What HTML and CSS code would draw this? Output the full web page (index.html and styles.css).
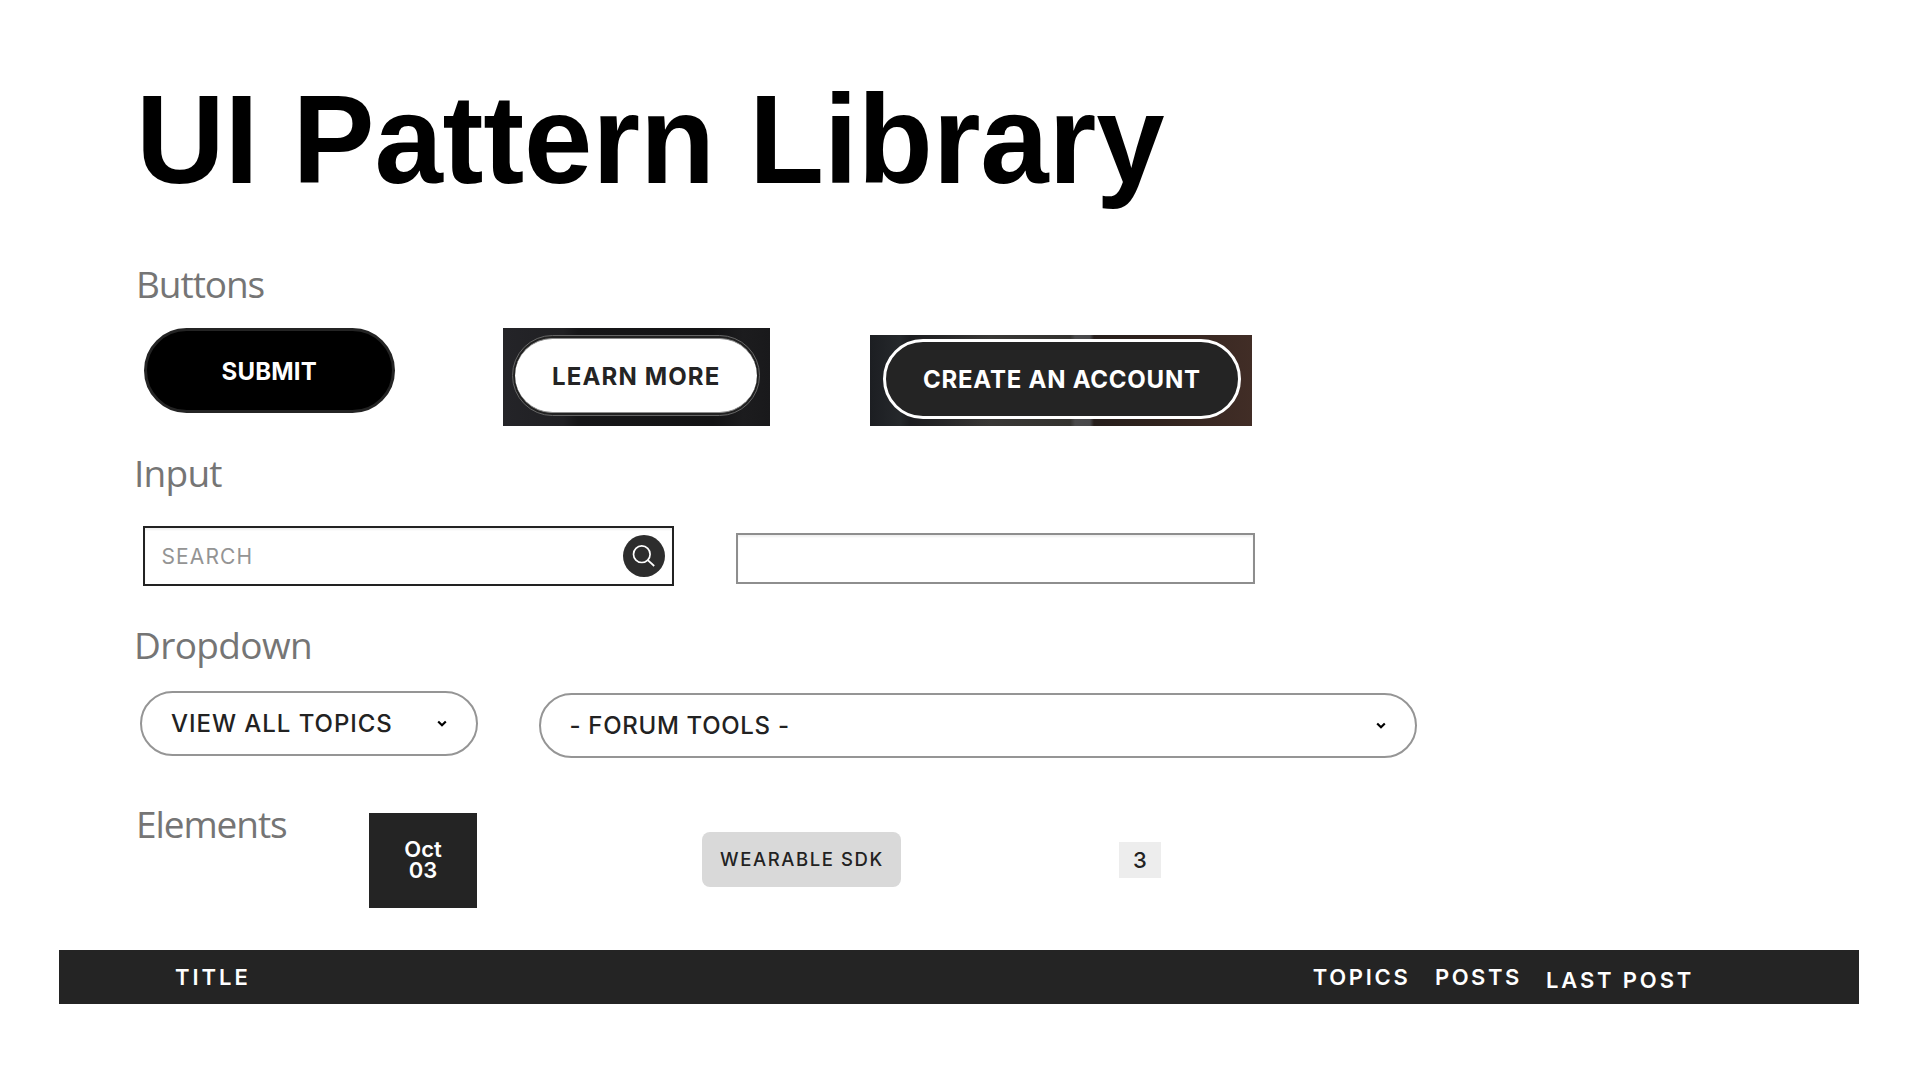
FILE: index.html
```html
<!DOCTYPE html>
<html lang="en">
<head>
  <meta charset="UTF-8">
  <meta name="viewport" content="width=device-width, initial-scale=1.0">
  <title>UI Pattern Library</title>
  <link rel="stylesheet" href="styles.css">
</head>
<body>
  <main class="page">
    <h1 class="page-title">UI Pattern Library</h1>

    <section class="section section-buttons">
      <h2 class="section-label label-buttons">Buttons</h2>
      <div class="row buttons-row">
        <button class="btn btn-submit">SUBMIT</button>
        <div class="photo photo-learn">
          <button class="btn btn-learn"><span class="btn-face">LEARN MORE</span></button>
        </div>
        <div class="photo photo-create">
          <button class="btn btn-create">CREATE AN ACCOUNT</button>
        </div>
      </div>
    </section>

    <section class="section section-input">
      <h2 class="section-label label-input">Input</h2>
      <div class="row input-row">
        <div class="search-box">
          <span class="search-placeholder">SEARCH</span>
          <svg class="search-icon" width="42" height="42" viewBox="0 0 42 42">
            <circle cx="21" cy="21" r="21" fill="#2d2d2d"/>
            <circle cx="18.8" cy="19.2" r="8.3" fill="none" stroke="#fff" stroke-width="1.7"/>
            <path d="M24.8 25.2 L31.2 31" fill="none" stroke="#fff" stroke-width="1.8"/>
          </svg>
        </div>
        <div class="text-box"></div>
      </div>
    </section>

    <section class="section section-dropdown">
      <h2 class="section-label label-dropdown">Dropdown</h2>
      <div class="row dropdown-row">
        <div class="select select-topics">
          <span class="select-text text-topics">VIEW ALL TOPICS</span>
          <svg class="chevron" width="10" height="8" viewBox="0 0 10 8"><path d="M1.2 1.5 L5 5.2 L8.8 1.5" fill="none" stroke="#000" stroke-width="2.2"/></svg>
        </div>
        <div class="select select-tools">
          <span class="select-text text-tools">- FORUM TOOLS -</span>
          <svg class="chevron" width="10" height="8" viewBox="0 0 10 8"><path d="M1.2 1.5 L5 5.2 L8.8 1.5" fill="none" stroke="#000" stroke-width="2.2"/></svg>
        </div>
      </div>
    </section>

    <section class="section section-elements">
      <h2 class="section-label label-elements">Elements</h2>
      <div class="date-tile">Oct<br>03</div>
      <span class="tag">WEARABLE SDK</span>
      <span class="count">3</span>
    </section>
  </main>

  <div class="table-head">
    <span class="col col-title">TITLE</span>
    <span class="col col-topics">TOPICS</span>
    <span class="col col-posts">POSTS</span>
    <span class="col col-last">LAST POST</span>
  </div>
</body>
</html>
```
FILE: styles.css
```css
* {
  margin: 0;
  padding: 0;
  box-sizing: border-box;
}

body {
  height: 1080px;
  background: #fff;
  font-family: Inter, "Liberation Sans", sans-serif;
  color: #222;
  overflow: hidden;
}

.page {
  padding: 75px 0 0 134px;
}

.page-title {
  margin-left: 2px;
  font-family: "Liberation Sans", Arial, sans-serif;
  font-size: 127px;
  line-height: 128px;
  font-weight: 700;
  letter-spacing: -0.18px;
  color: #000;
  transform: scaleX(0.968);
  transform-origin: 0 0;
}

.section-label {
  font-family: "Open Sans", "Noto Sans", sans-serif;
  font-size: 37px;
  line-height: 50px;
  font-weight: 400;
  color: #757575;
}

.label-buttons {
  padding-left: 2px;
  letter-spacing: -1.05px;
}

.label-input {
  letter-spacing: -0.75px;
}

.label-dropdown {
  letter-spacing: -0.63px;
}

.label-elements {
  width: 235px;
  padding-left: 2px;
  letter-spacing: -1.08px;
}

.row {
  display: flex;
  align-items: flex-start;
}

/* Buttons */
.section-buttons {
  margin-top: 56px;
}

.buttons-row {
  margin-top: 19px;
  padding-left: 10px;
}

.btn {
  display: flex;
  align-items: center;
  border: none;
  font-family: inherit;
  font-size: 24px;
  font-weight: 700;
  white-space: nowrap;
}

.btn-submit {
  width: 251px;
  height: 85px;
  padding: 2px 0 0 74.5px;
  border: 3px solid #242424;
  border-radius: 43px;
  background: #000;
  color: #fff;
  letter-spacing: 0.2px;
}

.photo {
  display: flex;
  align-items: flex-start;
}

.photo-learn {
  width: 267px;
  height: 98px;
  margin-left: 108px;
  padding: 7px 0 0 9px;
  background: linear-gradient(90deg, #242428 0, #202023 60px, #161618 75px, #131314 210px, #1c1c1e 240px, #19191b 100%);
}

.btn-learn {
  width: 248px;
  height: 81px;
  padding: 2px;
  border: 1px solid #666;
  border-radius: 41px;
  background: #222;
}

.btn-face {
  display: flex;
  align-items: center;
  width: 100%;
  height: 75px;
  padding: 2px 0 0 37px;
  border: 1px solid #8c8c8c;
  border-width: 1px 0;
  border-radius: 38px;
  background: #fff;
  color: #242424;
  letter-spacing: 1.14px;
}

.photo-create {
  width: 382px;
  height: 91px;
  margin: 7px 0 0 100px;
  padding: 4px 0 0 13px;
  background:
    linear-gradient(90deg, #1c1e22 0, #25282b 30px, #1c1d20 40px, transparent 120px),
    linear-gradient(90deg, #2d2c2b 0, #393836 110px, #33322f 200px, #4a4a4b 205px, #48484a 220px, #261e1b 224px, #30231e 290px, #3a2923 340px, #412d26 100%);
}

.btn-create {
  width: 358px;
  height: 80px;
  padding: 1px 0 0 37px;
  border: 3px solid #fff;
  border-radius: 40px;
  background: #242424;
  color: #fff;
  letter-spacing: 0.76px;
}

/* Inputs */
.section-input {
  margin-top: 22px;
}

.input-row {
  margin-top: 28px;
  padding-left: 9px;
}

.search-box {
  display: flex;
  align-items: center;
  justify-content: space-between;
  width: 531px;
  height: 60px;
  padding: 0 7px 0 16.5px;
  border: 2px solid #222;
  background: #fff;
  box-shadow: inset 0 2px 2px #f0f0f0;
}

.search-placeholder {
  padding-top: 1px;
  font-size: 21px;
  letter-spacing: 1.1px;
  color: #949494;
}

.text-box {
  width: 519px;
  height: 51px;
  margin: 7px 0 0 62px;
  border: 2px solid #8e8e8e;
  background: #fff;
  box-shadow: inset 0 2px 2px #f0f0f0;
}

/* Dropdowns */
.section-dropdown {
  margin-top: 34px;
}

.dropdown-row {
  margin-top: 21px;
  padding-left: 6px;
}

.select {
  display: flex;
  align-items: center;
  justify-content: space-between;
  height: 65px;
  border: 2px solid #959595;
  border-radius: 33px;
  background: #fff;
}

.select-topics {
  width: 338px;
  padding: 0 29px 0 29px;
}

.select-tools {
  width: 878px;
  margin: 2px 0 0 61px;
  padding: 0 29px 0 28.5px;
}

.select-text {
  font-size: 24px;
  font-weight: 500;
  color: #222;
}

.text-topics {
  letter-spacing: 0.96px;
}

.text-tools {
  letter-spacing: 0.68px;
}

.chevron {
  margin-top: 1px;
}

/* Elements */
.section-elements {
  display: flex;
  align-items: flex-start;
  margin-top: 41px;
}

.date-tile {
  width: 108px;
  height: 95px;
  margin-top: 14px;
  padding-top: 26px;
  background: #242424;
  color: #fff;
  font-size: 22px;
  line-height: 21px;
  font-weight: 600;
  text-align: center;
}

.tag {
  width: 199px;
  height: 55px;
  margin: 33px 0 0 225px;
  padding-left: 18px;
  border-radius: 8px;
  background: #d9d9d9;
  color: #222;
  font-size: 18.5px;
  line-height: 55px;
  font-weight: 500;
  letter-spacing: 1.6px;
}

.count {
  width: 42px;
  height: 36px;
  margin: 43px 0 0 218px;
  background: #ededed;
  color: #222;
  font-size: 22px;
  line-height: 36px;
  font-weight: 500;
  text-align: center;
}

/* Table header */
.table-head {
  display: flex;
  width: 1800px;
  height: 54px;
  margin: 42px 0 0 59px;
  padding-left: 116px;
  background: #242424;
  color: #fff;
}

.col {
  font-size: 22px;
  line-height: 54px;
  font-weight: 600;
  white-space: nowrap;
}

.col-title {
  width: 1137.7px;
  letter-spacing: 2.95px;
}

.col-topics {
  width: 122.3px;
  letter-spacing: 2.7px;
}

.col-posts {
  width: 111px;
  letter-spacing: 2.5px;
}

.col-last {
  padding-top: 3px;
  letter-spacing: 2.85px;
}
```
